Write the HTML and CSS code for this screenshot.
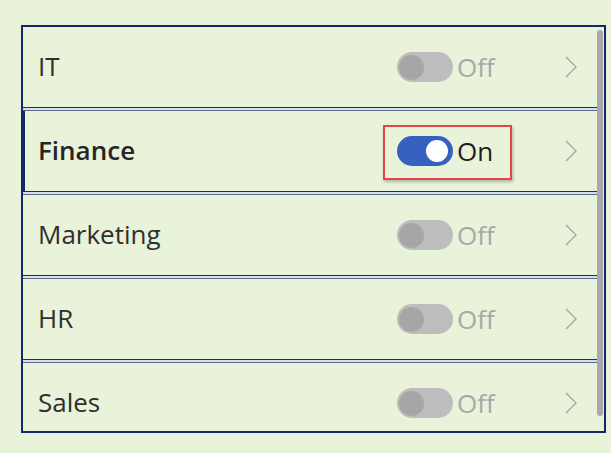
FILE: index.html
```html
<!DOCTYPE html>
<html>
<head>
<meta charset="utf-8">
<link rel="stylesheet" href="styles.css">
</head>
<body>
<div class="gallery">
  <div class="list">
    <div class="row">
      <span class="label">IT</span>
      <div class="toggle-group">
        <span class="toggle off"><span class="knob"></span></span>
        <span class="state off">Off</span>
      </div>
      <svg class="chev" viewBox="0 0 12 22"><path d="M1 1 L11 11 L1 21" /></svg>
    </div>
    <div class="sep"></div>
    <div class="row selected">
      <span class="label bold">Finance</span>
      <div class="toggle-group">
        <span class="highlight"></span>
        <span class="toggle on"><span class="knob"></span></span>
        <span class="state on">On</span>
      </div>
      <svg class="chev" viewBox="0 0 12 22"><path d="M1 1 L11 11 L1 21" /></svg>
    </div>
    <div class="sep"></div>
    <div class="row">
      <span class="label">Marketing</span>
      <div class="toggle-group">
        <span class="toggle off"><span class="knob"></span></span>
        <span class="state off">Off</span>
      </div>
      <svg class="chev" viewBox="0 0 12 22"><path d="M1 1 L11 11 L1 21" /></svg>
    </div>
    <div class="sep"></div>
    <div class="row">
      <span class="label">HR</span>
      <div class="toggle-group">
        <span class="toggle off"><span class="knob"></span></span>
        <span class="state off">Off</span>
      </div>
      <svg class="chev" viewBox="0 0 12 22"><path d="M1 1 L11 11 L1 21" /></svg>
    </div>
    <div class="sep"></div>
    <div class="row">
      <span class="label">Sales</span>
      <div class="toggle-group">
        <span class="toggle off"><span class="knob"></span></span>
        <span class="state off">Off</span>
      </div>
      <svg class="chev" viewBox="0 0 12 22"><path d="M1 1 L11 11 L1 21" /></svg>
    </div>
  </div>
  <div class="scrollbar"><div class="thumb"></div></div>
</div>
</body>
</html>
```
FILE: styles.css
```css
html, body {
  margin: 0;
  padding: 0;
  background: #e8f3d9;
  width: 611px;
  height: 453px;
  overflow: hidden;
  font-family: "Open Sans", "Noto Sans", sans-serif;
}
.gallery {
  margin: 25px 0 0 21px;
  width: 581px;
  height: 404px;
  border: 2px solid #16266a;
  display: flex;
  overflow: hidden;
}
.list {
  width: 574px;
  display: flex;
  flex-direction: column;
  flex-shrink: 0;
}
.row {
  height: 80px;
  flex-shrink: 0;
  display: flex;
  align-items: center;
  padding: 0 20px 0 15px;
  box-sizing: border-box;
  position: relative;
}
.row.selected {
  border-left: 2px solid #16266a;
  padding-left: 13px;
}
.label {
  flex: 1;
  font-size: 26px;
  line-height: 30px;
  margin-top: -3px;
  color: #2f2f2f;
}
.label.bold {
  font-weight: 600;
  font-size: 26px;
  color: #262626;
}
.toggle-group {
  width: 168px;
  display: flex;
  align-items: center;
  position: relative;
}
.toggle {
  width: 56px;
  height: 30px;
  border-radius: 15px;
  display: flex;
  align-items: center;
  box-sizing: border-box;
}
.toggle.off {
  background: #bdbdbd;
  padding-left: 2px;
}
.toggle.off .knob {
  width: 25px;
  height: 25px;
  border-radius: 50%;
  background: #a6a6a6;
}
.toggle.on {
  background: #3761c0;
  justify-content: flex-end;
  padding-right: 5px;
}
.toggle.on .knob {
  width: 22px;
  height: 22px;
  border-radius: 50%;
  background: #ffffff;
}
.state {
  margin-left: 4px;
  font-size: 26px;
  line-height: 30px;
}
.state.off { color: #a9a9a9; }
.state.on { color: #1f1f1f; }
.highlight {
  position: absolute;
  left: -14px;
  top: -11px;
  width: 129px;
  height: 55px;
  box-sizing: border-box;
  border: 2px solid #e0464b;
  box-shadow: 1px 2px 3px rgba(0,0,0,0.25);
}
.chev {
  width: 12px;
  height: 22px;
  fill: none;
  stroke: #a3a3a3;
  stroke-width: 1.3;
}
.sep {
  height: 4px;
  flex-shrink: 0;
  box-sizing: border-box;
  border-top: 1px solid #1c2b6c;
  border-bottom: 1px solid #5b6892;
  background: #d9e2e2;
}
.scrollbar {
  width: 7px;
  padding-top: 3px;
}
.thumb {
  width: 6px;
  height: 386px;
  background: #a9a9a9;
  border-radius: 3px;
}
```
